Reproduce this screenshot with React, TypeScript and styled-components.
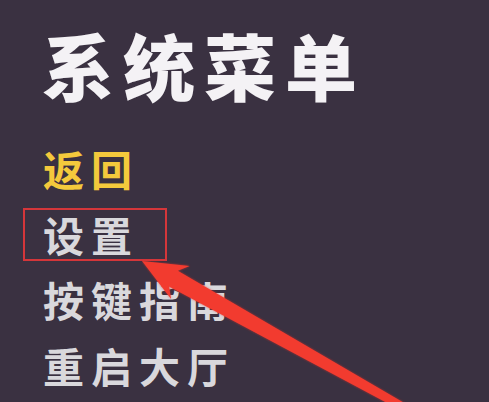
import React from 'react';
import styled, { createGlobalStyle } from 'styled-components';

const GlobalStyle = createGlobalStyle`
  html, body {
    margin: 0;
    padding: 0;
    background: #3a3141;
  }
  body {
    font-family: "Noto Sans CJK SC", "Noto Sans", sans-serif;
  }
`;

const Screen = styled.div`
  position: relative;
  width: 489px;
  height: 402px;
  overflow: hidden;
  background: #3a3141;
  padding: 28px 0 0 23px;
  box-sizing: border-box;
`;

const Title = styled.h1`
  margin: 0 0 42px 19px;
  font-size: 72px;
  line-height: 72px;
  font-weight: 900;
  letter-spacing: 9px;
  color: #f4f2f5;
`;

const MenuList = styled.ul`
  list-style: none;
  margin: 0;
  padding: 0;
  display: flex;
  flex-direction: column;
  align-items: flex-start;
  gap: 12.5px;
`;

const MenuItem = styled.li<{ $active?: boolean; $selected?: boolean }>`
  padding: 0 26px 0 18px;
  border: 2px solid ${(p) => (p.$selected ? '#d4363a' : 'transparent')};
  font-size: 41px;
  line-height: 49px;
  font-weight: 700;
  letter-spacing: 7px;
  color: ${(p) => (p.$active ? '#f4c93c' : '#d9d8dc')};
`;

const ArrowLayer = styled.svg`
  position: absolute;
  inset: 0;
  pointer-events: none;
`;

const items = [
  { label: '返回', active: true },
  { label: '设置', selected: true },
  { label: '按键指南' },
  { label: '重启大厅' },
];

// tapered pointer arrow drawn over the menu, tip near the selected box
const Arrow: React.FC = () => {
  const tip = { x: 142, y: 261 };
  const u = { x: 0.873, y: 0.488 };
  const p = { x: -0.488, y: 0.873 };
  const at = (l: number, w: number) =>
    `${(tip.x + u.x * l + p.x * w).toFixed(1)},${(tip.y + u.y * l + p.y * w).toFixed(1)}`;
  const points = [
    at(0, 0),
    at(44, -19),
    at(36, -9),
    at(300, -4),
    at(300, 4),
    at(36, 9),
    at(44, 19),
  ].join(' ');
  return (
    <ArrowLayer width="489" height="402" viewBox="0 0 489 402">
      <defs>
        <filter id="glow" x="-20%" y="-20%" width="140%" height="140%">
          <feGaussianBlur stdDeviation="1.2" />
        </filter>
      </defs>
      <polygon points={points} fill="#e8302b" filter="url(#glow)" opacity="0.7" />
      <polygon points={points} fill="#f23b2f" />
    </ArrowLayer>
  );
};

export default function App() {
  return (
    <>
      <GlobalStyle />
      <Screen>
        <Title>系统菜单</Title>
        <MenuList>
          {items.map((item) => (
            <MenuItem key={item.label} $active={item.active} $selected={item.selected}>
              {item.label}
            </MenuItem>
          ))}
        </MenuList>
        <Arrow />
      </Screen>
    </>
  );
}
